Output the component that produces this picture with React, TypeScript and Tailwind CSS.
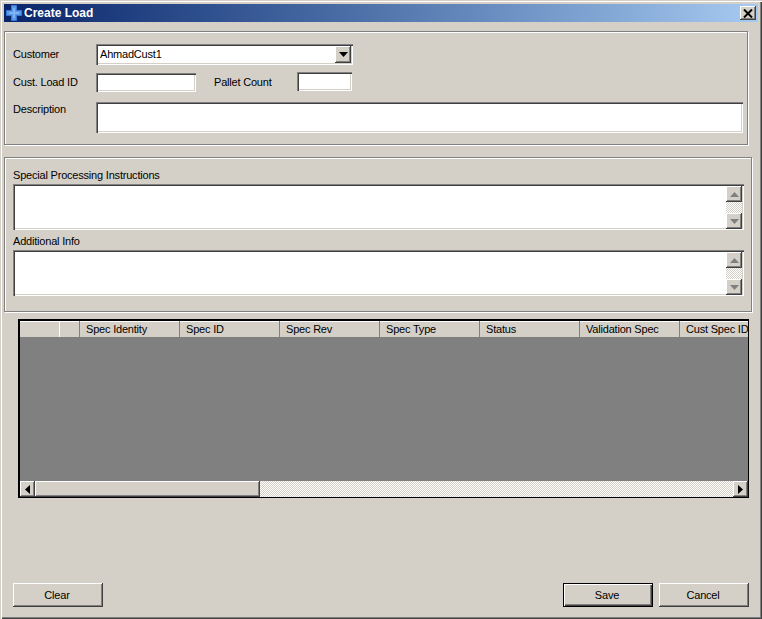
const SUNKEN =
  "bg-white shadow-[inset_1px_1px_0_#808080,inset_2px_2px_0_#404040,inset_-1px_-1px_0_#fff,inset_-2px_-2px_0_#d4d0c8]";
const RAISED =
  "bg-[#d4d0c8] shadow-[inset_-1px_-1px_0_#404040,inset_1px_1px_0_#fff,inset_-2px_-2px_0_#808080]";
const DEFAULT_RAISED =
  "bg-[#d4d0c8] shadow-[inset_0_0_0_1px_#000,inset_1px_1px_0_1px_#fff,inset_-1px_-1px_0_1px_#404040,inset_-2px_-2px_0_1px_#808080]";
const ETCHED =
  "border border-[#808080] shadow-[inset_1px_1px_0_#fff,1px_1px_0_#fff]";
const HATCH =
  "bg-[conic-gradient(#fff_25%,#d4d0c8_0_50%,#fff_0_75%,#d4d0c8_0)] bg-[length:2px_2px]";

const COLUMNS = ["Spec Identity", "Spec ID", "Spec Rev", "Spec Type", "Status", "Validation Spec", "Cust Spec ID"];

function Arrow({ dir, color = "#000" }: { dir: "up" | "down" | "left" | "right"; color?: string }) {
  const points = {
    up: "4.5,1 0,6 9,6",
    down: "0,1 9,1 4.5,6",
    left: "6,0 6,9 1,4.5",
    right: "1,0 1,9 6,4.5",
  }[dir];
  const vertical = dir === "up" || dir === "down";
  return (
    <svg width={vertical ? 9 : 7} height={vertical ? 7 : 9} viewBox={vertical ? "0 0 9 7" : "0 0 7 9"}>
      <polygon points={points} fill={color} />
    </svg>
  );
}

function ScrollColumn() {
  return (
    <div className="flex flex-col w-4 h-[43px] mt-0.5 mr-0.5">
      <div className={`${RAISED} h-4 flex items-center justify-center`}>
        <Arrow dir="up" color="#808080" />
      </div>
      <div className={`${HATCH} flex-1`} />
      <div className={`${RAISED} h-4 flex items-center justify-center`}>
        <Arrow dir="down" color="#808080" />
      </div>
    </div>
  );
}

function Memo() {
  return (
    <div className={`${SUNKEN} w-[731px] h-[46px] flex justify-end`}>
      <ScrollColumn />
    </div>
  );
}

function Button({ label, primary }: { label: string; primary?: boolean }) {
  return (
    <button className={`${primary ? DEFAULT_RAISED : RAISED} w-[90px] h-6 pr-0.5 flex items-center justify-center text-black`}>
      {label}
    </button>
  );
}

export default function App() {
  return (
    <div className="w-[762px] h-[619px] flex flex-col pl-1 pt-1 pb-3 bg-[#d4d0c8] text-[11px] tracking-[-0.2px] leading-none text-black font-['Liberation_Sans',Arial,sans-serif] shadow-[inset_1px_1px_0_#d4d0c8,inset_2px_2px_0_#fff,inset_-1px_-1px_0_#404040,inset_-2px_-2px_0_#808080] overflow-hidden">
      {/* Title bar */}
      <div className="w-[754px] h-[18px] shrink-0 flex items-center bg-gradient-to-r from-[#0a246a] to-[#a6caf0]">
        <svg width="16" height="16" viewBox="0 0 16 16" className="ml-0.5 shrink-0">
          <path d="M5.500 .5h5v5h5v5h-5v5h-5v-5h-5v-5h5z" fill="#5a97e6" stroke="#3a78d8" />
          <path d="M7 3h2v4h4v2H9v4H7V9H3V7h4z" fill="#7db4f2" />
        </svg>
        <span className="ml-0.5 text-white font-bold text-[12px] tracking-normal">Create Load</span>
        <div className={`${RAISED} w-4 h-[14px] ml-auto mr-0.5 flex items-center justify-center`}>
          <svg width="10" height="9" viewBox="0 0 10 9">
            <path d="M1 0.500 9 8.500M9 0.500 1 8.500" stroke="#000" strokeWidth="2" fill="none" />
          </svg>
        </div>
      </div>

      {/* Customer group */}
      <div className={`${ETCHED} w-[744px] h-[114px] mt-[9px] shrink-0 pl-2 pt-3 flex flex-col`}>
        <div className="flex items-start h-[21px]">
          <span className="w-[83px] mt-[5px]">Customer</span>
          <div className={`${SUNKEN} w-[257px] h-[21px] flex items-center justify-between pl-1 pr-0.5`}>
            <span>AhmadCust1</span>
            <div className={`${RAISED} w-4 h-[17px] flex items-center justify-center`}>
              <Arrow dir="down" />
            </div>
          </div>
        </div>
        <div className="flex items-start h-[19px] mt-[7px]">
          <span className="w-[83px] mt-[5px]">Cust. Load ID</span>
          <div className={`${SUNKEN} w-[100px] h-[19px] mt-px`} />
          <span className="w-[83px] ml-[18px] mt-[5px]">Pallet Count</span>
          <div className={`${SUNKEN} w-[55px] h-[19px]`} />
        </div>
        <div className="flex items-start h-[31px] mt-[11px]">
          <span className="w-[83px] mt-0.5">Description</span>
          <div className={`${SUNKEN} w-[647px] h-[31px]`} />
        </div>
      </div>

      {/* Instructions group */}
      <div className={`${ETCHED} w-[748px] h-[155px] mt-3 shrink-0 pl-2 pt-3 flex flex-col`}>
        <span className="h-3">Special Processing Instructions</span>
        <div className="mt-[2px]">
          <Memo />
        </div>
        <span className="h-3 mt-1.5">Additional Info</span>
        <div className="mt-0.5">
          <Memo />
        </div>
      </div>

      {/* Spec grid */}
      <div className="w-[731px] h-[179px] mt-[7px] ml-3.5 shrink-0 flex flex-col bg-[#808080] border-t-2 border-l-2 border-r border-b border-black">
        <div className="h-4 shrink-0 flex bg-[#d4d0c8] overflow-hidden shadow-[inset_0_1px_0_#fff]">
          <div className="w-10 shrink-0 border-r border-white" />
          <div className="w-5 shrink-0 border-r border-[#808080]" />
          {COLUMNS.map((col) => (
            <div key={col} className="w-[100px] shrink-0 pl-1.5 pt-px flex items-center whitespace-nowrap border-r border-[#808080]">
              {col}
            </div>
          ))}
        </div>
        <div className="flex-1" />
        <div className={`${HATCH} h-4 shrink-0 flex`}>
          <div className={`${RAISED} w-[15px] flex items-center justify-center`}>
            <Arrow dir="left" />
          </div>
          <div className={`${RAISED} w-[225px]`} />
          <div className={`${RAISED} w-[15px] ml-auto flex items-center justify-center`}>
            <Arrow dir="right" />
          </div>
        </div>
      </div>

      {/* Buttons */}
      <div className="mt-auto ml-[9px] w-[736px] flex">
        <Button label="Clear" />
        <div className="ml-auto flex gap-1.5">
          <Button label="Save" primary />
          <Button label="Cancel" />
        </div>
      </div>
    </div>
  );
}
